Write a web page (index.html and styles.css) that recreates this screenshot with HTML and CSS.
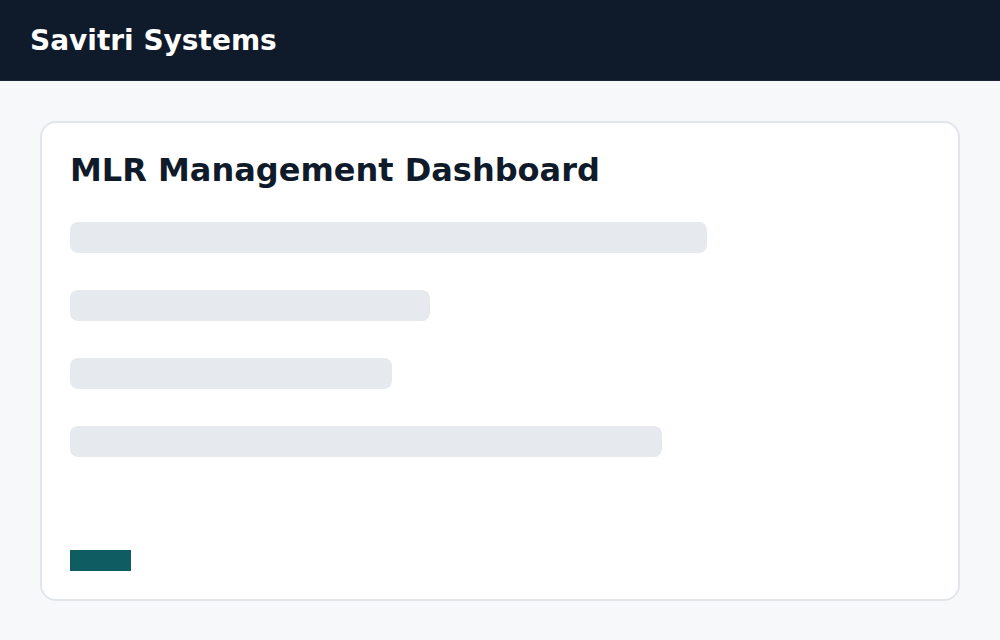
FILE: index.html
```html
<!DOCTYPE html>
<html lang="en">
<head>
  <meta charset="UTF-8">
  <meta name="viewport" content="width=device-width, initial-scale=1.0">
  <title>MLR Management Dashboard</title>
  <link rel="stylesheet" href="styles.css">
</head>
<body>
  <header class="topbar">
    <span class="brand">Savitri Systems</span>
  </header>

  <main class="page">
    <section class="card">
      <h1>MLR Management Dashboard</h1>

      <div class="skeleton-list">
        <div class="skeleton" style="width: 637px"></div>
        <div class="skeleton" style="width: 360px"></div>
        <div class="skeleton" style="width: 322px"></div>
        <div class="skeleton" style="width: 592px"></div>
      </div>

      <div class="action-bar"></div>
    </section>
  </main>
</body>
</html>
```

FILE: styles.css
```css
:root {
  --navy: #0f1b2a;
  --bg-color: #f7f8fa;
  --card-bg: #ffffff;
  --border-color: #e2e6ea;
  --skeleton: #e6e9ed;
  --teal: #0f5c63;
}

* {
  margin: 0;
  padding: 0;
  box-sizing: border-box;
  font-family: 'DejaVu Sans', 'Noto Sans', sans-serif;
}

body {
  background-color: var(--bg-color);
  color: var(--navy);
  min-height: 100vh;
  display: flex;
  flex-direction: column;
}

.topbar {
  height: 81px;
  background-color: var(--navy);
  border-bottom: 1px solid #1a2634;
  display: flex;
  align-items: center;
  padding: 0 30px;
}

.brand {
  color: #ffffff;
  font-size: 28px;
  font-weight: 700;
}

.page {
  flex: 1;
  display: flex;
  padding: 40px 40px 39px;
}

.card {
  flex: 1;
  display: flex;
  flex-direction: column;
  background-color: var(--card-bg);
  border: 2px solid var(--border-color);
  border-radius: 16px;
  padding: 28px;
}

h1 {
  font-size: 32px;
  font-weight: 700;
  color: var(--navy);
}

.skeleton-list {
  display: flex;
  flex-direction: column;
  gap: 37px;
  margin-top: 33px;
}

.skeleton {
  height: 31px;
  border-radius: 8px;
  background-color: var(--skeleton);
}

.action-bar {
  margin-top: auto;
  width: 61px;
  height: 21px;
  background-color: var(--teal);
}
```
